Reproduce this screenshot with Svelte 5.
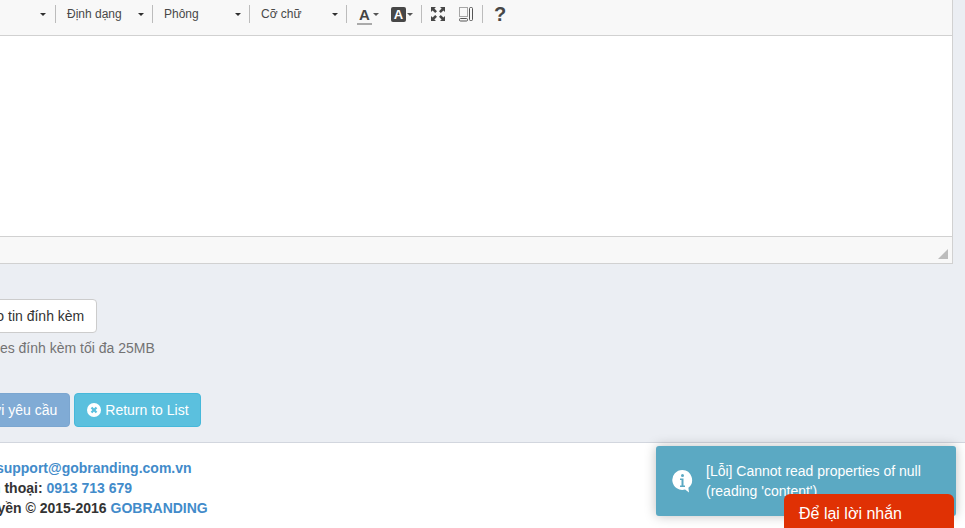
<script>
  const combos = ['Định dạng', 'Phông', 'Cỡ chữ'];
  const footer = [
    { label: 'Email: ', link: 'support@gobranding.com.vn' },
    { label: 'Số điện thoại: ', link: '0913 713 679' },
    { label: 'Bản quyền © 2015-2016 ', link: 'GOBRANDING' }
  ];
</script>

<div class="page">
  <div class="editor">
    <div class="toolbar">
      <span class="first"><i class="caret"></i></span>
      <span class="sep"></span>
      {#each combos as label}
        <span class="combo">
          <span>{label}</span>
          <i class="caret"></i>
        </span>
        <span class="sep"></span>
      {/each}

      <span class="tool color">
        <span class="letter">A<b></b></span>
        <i class="caret small"></i>
      </span>
      <span class="tool bg">
        <span class="letter-box">A</span>
        <i class="caret small"></i>
      </span>
      <span class="sep"></span>
      <span class="icons">
        <span class="tool icon">
          <svg width="16" height="16" viewBox="0 0 16 16" fill="#474747">
            <path d="M1 1h5L4.400 2.600 7 5.200 5.200 7 2.600 4.400 1 6zM15 1v5l-1.600-1.600L10.800 7 9 5.200l2.600-2.600L10 1zM1 15v-5l1.600 1.600L5.200 9 7 10.800l-2.600 2.600L6 15zM15 15h-5l1.600-1.600L9 10.800 10.800 9l2.600 2.600L15 10z" />
          </svg>
        </span>
        <span class="tool icon">
          <svg width="14" height="16" viewBox="0 0 14 16" fill="none" stroke="#555" stroke-width="1">
            <path d="M.5 1.500h8v9h-8z" stroke-dasharray="1 1" />
            <rect x="10.500" y="1.500" width="3" height="13" rx="1" />
            <rect x=".5" y="12.500" width="8" height="2.500" rx="1" />
          </svg>
        </span>
      </span>
      <span class="sep"></span>
      <span class="help">?</span>
    </div>
    <div class="body"></div>
    <div class="status"><i class="resize"></i></div>
  </div>

  <div class="form-bottom">
    <button class="btn-default">Tạo tin đính kèm</button>
    <p class="hint">Có files đính kèm tối đa 25MB</p>

    <div class="actions">
      <button class="btn-send">Gửi yêu cầu</button>
      <button class="btn-info">
        <svg width="14" height="14" viewBox="0 0 14 14">
          <circle cx="7" cy="7" r="7" fill="#fff" />
          <path d="M5.300 3.700 7 5.400l1.700-1.700 1.600 1.600L8.600 7l1.700 1.700-1.600 1.600L7 8.600l-1.700 1.700-1.600-1.600L5.400 7 3.700 5.300z" fill="#5bc0de" />
        </svg>
        Return to List
      </button>
    </div>
  </div>

  <footer class="footer">
    {#each footer as f}
      <div>{f.label}<a href="#top">{f.link}</a></div>
    {/each}
  </footer>

  <div class="toast">
    <svg class="toast-icon" width="21" height="24" viewBox="0 0 21 24">
      <path d="M10.500 1a10 10 0 1 0 2.600 19.600L17 23.500l-.6-4.800A10 10 0 0 0 10.500 1z" fill="#fff" />
      <circle cx="10.500" cy="6.500" r="1.500" fill="#5ba9c3" />
      <path d="M8 9.500h3.500v7H13V18H8v-1.500h1.500V11H8z" fill="#5ba9c3" />
    </svg>
    <div>[Lỗi] Cannot read properties of null (reading 'content')</div>
  </div>

  <div class="chat">Để lại lời nhắn</div>
</div>

<style>
:global(body) {
  margin: 0;
  background: #ebeef3;
}

.page {
  position: relative;
  width: 965px;
  height: 528px;
  overflow: hidden;
  font-family: "Liberation Sans", Arial, sans-serif;
  font-size: 14px;
  color: #333;
}

.editor {
  width: 952px;
  border: 1px solid #d1d1d1;
  border-width: 0 1px 1px 0;
  background: #fff;
}

.toolbar {
  display: flex;
  align-items: center;
  box-sizing: border-box;
  height: 36px;
  padding-bottom: 7px;
  background: #f8f8f8;
  border-bottom: 1px solid #d1d1d1;
  font-size: 12px;
  color: #484848;
}

.first {
  display: flex;
  justify-content: flex-end;
  width: 55px;
  padding-right: 9px;
  box-sizing: border-box;
}

.sep {
  flex: none;
  width: 1px;
  height: 18px;
  background: #bcbcbc;
}

.combo {
  display: flex;
  flex: none;
  justify-content: space-between;
  align-items: center;
  box-sizing: border-box;
  width: 96px;
  padding: 0 8px 0 11px;
}

.caret {
  display: block;
  width: 0;
  height: 0;
  border: 3px solid transparent;
  border-top-color: #2f2f2f;
  border-bottom: 0;
}

.caret.small {
  border-top-color: #555;
}

.tool {
  display: flex;
  align-items: center;
  flex: none;
}

.color {
  width: 34px;
  margin-left: 10px;
  gap: 1px;
}

.letter {
  position: relative;
  width: 15px;
  font-size: 15px;
  font-weight: bold;
  line-height: 17px;
  text-align: center;
  color: #444;
}

.letter b {
  position: absolute;
  left: 0;
  right: 0;
  bottom: -2px;
  height: 2px;
  background: #aaa;
}

.bg {
  width: 30px;
  gap: 1px;
}

.letter-box {
  width: 15px;
  height: 15px;
  border-radius: 2px;
  background: #474747;
  color: #fff;
  font-size: 13px;
  font-weight: bold;
  line-height: 15px;
  text-align: center;
}

.icons {
  display: flex;
  padding: 0 2px;
}

.icon {
  width: 28px;
  justify-content: center;
}

.help {
  margin-left: 11px;
  font-size: 20px;
  font-weight: bold;
  color: #474747;
}

.body {
  height: 200px;
  border-bottom: 1px solid #d1d1d1;
}

.status {
  position: relative;
  height: 26px;
  background: #f8f8f8;
}

.resize {
  position: absolute;
  right: 4px;
  bottom: 4px;
  width: 0;
  height: 0;
  border-left: 10px solid transparent;
  border-bottom: 10px solid #bcbcbc;
}

.form-bottom {
  margin-left: -32px;
  padding-top: 35px;
}

button {
  font: inherit;
  box-sizing: border-box;
  height: 34px;
  padding: 0 12px;
  border-radius: 4px;
  border: 1px solid transparent;
  white-space: nowrap;
}

.btn-default {
  display: block;
  margin-left: -1px;
  background: #fff;
  border-color: #ccc;
  color: #333;
}

.hint {
  margin: 5px 0 0;
  line-height: 20px;
  color: #737373;
}

.actions {
  display: flex;
  gap: 4px;
  margin-top: 35px;
}

.btn-send {
  background: #80abd5;
  border-color: #7ba6d0;
  color: #fff;
}

.btn-info {
  display: flex;
  align-items: center;
  gap: 4px;
  padding-right: 11px;
  background: #5bc0de;
  border-color: #46b8da;
  color: #fff;
}

.footer {
  position: absolute;
  left: 0;
  right: 0;
  top: 442px;
  bottom: 0;
  margin-left: -50px;
  padding-top: 15px;
  box-sizing: border-box;
  background: #fff;
  border-top: 1px solid #d2d6de;
  font-weight: bold;
  line-height: 20px;
}

.footer a {
  color: #428bca;
  text-decoration: none;
}

.toast {
  position: absolute;
  left: 656px;
  top: 446px;
  box-sizing: border-box;
  display: flex;
  align-items: center;
  gap: 13px;
  width: 300px;
  height: 70px;
  padding: 0 15px 0 16px;
  border-radius: 3px;
  background: #5ba9c3;
  color: #fff;
  line-height: 20px;
  box-shadow: 0 0 12px rgba(0, 0, 0, .25);
}

.toast-icon {
  flex: none;
}

.chat {
  position: absolute;
  left: 784px;
  top: 494px;
  width: 170px;
  height: 40px;
  box-sizing: border-box;
  padding: 10px 15px;
  border-radius: 6px 6px 0 0;
  background: #e03104;
  color: #fff;
  font-size: 16px;
  line-height: 20px;
}
</style>
